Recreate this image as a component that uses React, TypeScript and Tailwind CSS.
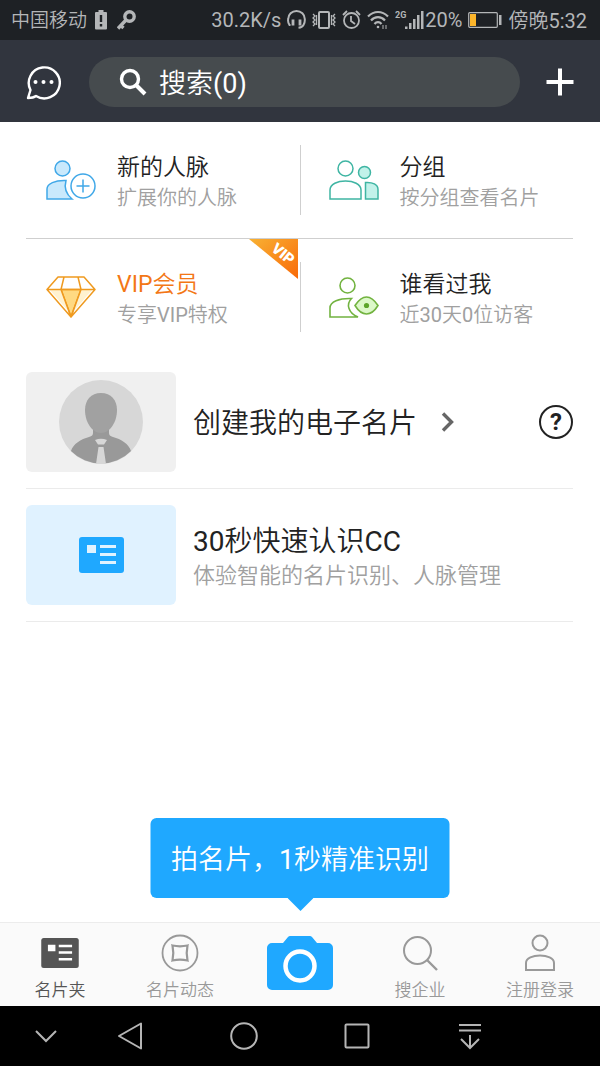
import React from 'react';

interface ShortcutProps {
    title: string;
    subtitle: string;
    icon: React.ReactNode;
    className?: string;
    titleClass?: string;
    children?: React.ReactNode;
}

const StatusBar = () => (
    <div className="flex h-10 items-center justify-between bg-[#1e2125] pl-[11px] pr-[13px] text-[20px] leading-6 text-[#b4b6b8]">
        <div className="flex items-center">
            <span className="pt-0.5 text-[19px]">中国移动</span>
            <svg className="ml-2 h-5 w-3" viewBox="0 0 12 20" fill="currentColor">
                <path fillRule="evenodd" d="M3.500 0h5v2H11a1 1 0 0 1 1 1v15.500a1 1 0 0 1-1 1H1a1 1 0 0 1-1-1V3a1 1 0 0 1 1-1h2.500zM4.800 5v7h2.400V5zM4.800 14v2.500h2.400V14z" />
            </svg>
            <svg className="ml-2.5 h-5 w-5" viewBox="0 0 20 20" fill="none" stroke="currentColor" strokeWidth="3.400">
                <circle cx="12.500" cy="6.500" r="4.700" />
                <path d="M9.500 9.500L1 18.500M3 15l3.500 3" />
            </svg>
        </div>
        <div className="flex items-center">
            <span>30.2K/s</span>
            <svg className="ml-1.5 h-5 w-[19px]" viewBox="0 0 19 20" fill="none" stroke="currentColor" strokeWidth="2">
                <path d="M3.500 15H2.500C.5 12 1 10 1.200 9a8.300 8 0 0 1 16.600 0c.2 3 0 4-1.300 6-1 1.800-2.500 2.500-5 2.800" />
                <path d="M6 9.500v6M13 9.500v6" strokeWidth="2.800" />
            </svg>
            <svg className="ml-1.5 h-5 w-6" viewBox="0 0 24 20" fill="none" stroke="currentColor" strokeWidth="2">
                <rect x="7" y="2" width="10" height="16" rx="1" />
                <path d="M1 4l2 2-2 2 2 2-2 2 2 2-2 2M4.500 5v10M23 4l-2 2 2 2-2 2 2 2-2 2 2 2M19.500 5v10" strokeWidth="1.300" />
            </svg>
            <svg className="ml-1.5 h-5 w-[19px]" viewBox="0 0 19 20" fill="none" stroke="currentColor" strokeWidth="1.800">
                <circle cx="9.500" cy="10.500" r="7.500" />
                <path d="M9 6v5l4 3M1 5l4-4M18 5l-4-4" />
            </svg>
            <svg className="ml-1.5 h-5 w-[22px]" viewBox="0 0 22 20" fill="none" stroke="currentColor" strokeWidth="2.200">
                <path d="M1 6.500c6-6 14-6 20 0M4 10.500c4-4.500 10-4.500 14 0M7.500 14c2-2.500 5-2.500 7 0" />
                <circle cx="11" cy="17" r="1.300" fill="currentColor" stroke="none" />
                <path d="M16 15v4M19 15v4" strokeWidth="1" />
            </svg>
            <svg className="ml-1.5 h-[22px] w-[30px]" viewBox="0 0 30 22" fill="currentColor">
                <text x="0" y="9" fontSize="9" fontWeight="700">2G</text>
                <path d="M10 17.500h2.500V20H10zM14 14h2.500v6H14zM18 10h2.500v10H18zM22 6h2.500v14H22zM26 2h2.500v18H26z" />
            </svg>
            <span>20%</span>
            <svg className="ml-1.5 h-4 w-[34px]" viewBox="0 0 34 16" fill="none">
                <rect x="0.700" y="0.700" width="28.600" height="14.600" rx="1" stroke="currentColor" strokeWidth="1.200" />
                <rect x="2" y="2" width="6" height="12" fill="#fcb52b" />
                <rect x="31" y="3" width="2.500" height="10" fill="currentColor" />
            </svg>
            <span className="ml-1.5 pt-0.5">傍晚5:32</span>
        </div>
    </div>
);

const SearchHeader = () => (
    <header className="flex h-[82px] items-center bg-[#31353e] px-[26px] pt-0.5">
        <button type="button" aria-label="消息">
            <svg className="h-9 w-[35px]" viewBox="0 0 35 36" fill="none" stroke="#fff" strokeWidth="2.400">
                <path d="M2 34l2.500-8A15.500 15.500 0 1 1 10 32c-2 1.500-4.500 2-8 2z" strokeLinejoin="round" />
                <g fill="#fff" stroke="none">
                    <circle cx="9.500" cy="18" r="2" />
                    <circle cx="17.500" cy="18" r="2" />
                    <circle cx="25.500" cy="18" r="2" />
                </g>
            </svg>
        </button>
        <label className="ml-7 flex h-[50px] min-w-0 flex-1 items-center rounded-full bg-[#464b4e] pl-[30px]">
            <svg className="h-7 w-7 shrink-0" viewBox="0 0 28 28" fill="none" stroke="#fff" strokeWidth="3.400">
                <circle cx="11" cy="11" r="8.500" />
                <path d="M17 17l9 9" strokeWidth="4" />
            </svg>
            <input
                type="text"
                aria-label="搜索"
                placeholder="搜索(0)"
                className="ml-3 w-full min-w-0 bg-transparent pt-1 text-[27px] leading-8 text-white outline-none placeholder:text-white"
            />
        </label>
        <button type="button" aria-label="添加" className="ml-[26px]">
            <svg className="h-7 w-7" viewBox="0 0 28 28" stroke="#fff" strokeWidth="4">
                <path d="M14 0.500v27M0.500 14h27" />
            </svg>
        </button>
    </header>
);

const Shortcut = ({ title, subtitle, icon, className = 'pl-5', titleClass = 'text-[#222]', children }: ShortcutProps) => (
    <a href="#" className={`relative flex h-[116px] items-center gap-[21px] ${className}`}>
        {icon}
        <span className="flex flex-col pt-1">
            <span className={`text-[23px] leading-8 ${titleClass}`}>{title}</span>
            <span className="text-[20px] leading-7 text-[#a0a0a0]">{subtitle}</span>
        </span>
        {children}
    </a>
);

const NewContactIcon = () => (
    <svg className="h-11 w-[50px]" viewBox="0 0 50 44" fill="#c9e9fc" stroke="#40a8e8" strokeWidth="1.500">
        <circle cx="16.500" cy="10.500" r="7.500" />
        <path d="M1 41V31c0-5 8-9 19-8.500-2 7-.5 13 6 18.500z" />
        <circle cx="37" cy="28" r="12" fill="#fff" />
        <path d="M37 21.500v13M30.500 28h13" />
    </svg>
);

const GroupIcon = () => (
    <svg className="h-11 w-[50px]" viewBox="0 0 50 44" fill="none" stroke="#3fb5a3" strokeWidth="1.500">
        <circle cx="16.500" cy="10.500" r="7.500" />
        <path d="M1 41V32c0-12 31-12 31 0v9z" />
        <circle cx="35.500" cy="14.500" r="6" fill="#c2f2ea" />
        <path d="M36.500 24.500c7-.5 12.500 2 12.500 7V41H36.500z" fill="#c2f2ea" />
    </svg>
);

const DiamondIcon = () => (
    <svg className="h-[42px] w-[50px]" viewBox="0 0 50 42" fill="none" stroke="#ef9a1f" strokeWidth="1.500" strokeLinejoin="round">
        <path d="M15 13.500h20l-10 27z" fill="#ffd982" />
        <path d="M4 14h11l8 22zM35 14h11L27 36z" fill="#fff2d0" stroke="none" />
        <path d="M12 1h26l11 12.500L25 41 1 13.500zM1 13.500h48M18 1l-3 12.500L25 41l10-27.500L32 1" />
    </svg>
);

const VisitorIcon = () => (
    <svg className="h-11 w-[50px]" viewBox="0 0 50 44" fill="none" stroke="#72b340" strokeWidth="1.600">
        <circle cx="18.500" cy="10.500" r="7.500" />
        <path d="M1 42V33c0-6 9-10 21.500-9.500C17 29 19 38 29 42z" />
        <path d="M26 30.500C30 24.500 33 22 37.500 22S45 24.500 49 30.500C45 37 42 39 37.500 39S30 37 26 30.500z" fill="#dcf8c9" />
        <circle cx="37.500" cy="30.500" r="2.600" fill="#5ca52a" stroke="none" />
    </svg>
);

const VipRibbon = () => (
    <svg className="absolute right-0.5 top-0 h-10 w-[49px] overflow-visible" viewBox="0 0 49 40">
        <defs>
            <linearGradient id="ribbon" x1="0" y1="0" x2="1" y2="1">
                <stop offset="0" stopColor="#f8b133" />
                <stop offset="1" stopColor="#f96a08" />
            </linearGradient>
        </defs>
        <path d="M0 0h49v40z" fill="url(#ribbon)" />
        <text x="34" y="20" fill="#fff" fontSize="15" fontWeight="900" textAnchor="middle" transform="rotate(39 34 15)">VIP</text>
    </svg>
);

const CardIcon = ({ className, lines }: { className: string; lines: string }) => (
    <svg className={className} viewBox="0 0 45 36">
        <rect width="45" height="36" rx="3" fill="currentColor" />
        <path d="M8 8h9v8H8zM21 8h16v3H21zM21 16h16v3H21zM21 24h16v3H21z" fill={lines} />
    </svg>
);

const Avatar = () => (
    <svg className="h-[84px] w-[84px]" viewBox="0 0 84 84">
        <circle cx="42" cy="42" r="42" fill="#d7d7d7" />
        <path d="M12 71c2-7 10-12 18-14 3-1 4-2 4-4v-6h16v6c0 2 1 3 4 4 8 2 16 7 18 14A42 42 0 0 1 12 71z" fill="#999" />
        <path d="M42 13c10 0 16 7 16 17 0 12-7 23-16 23S26 42 26 30c0-10 6-17 16-17z" fill="#a1a1a1" />
        <path d="M36 60q6-2.500 12 0l-3 4.500h-6zM39.500 67h5L47 84H37z" fill="#d7d7d7" />
    </svg>
);

const tabs = [
    {
        label: '名片夹',
        className: 'text-[#555]',
        icon: <CardIcon className="h-[30px] w-[38px]" lines="#fff" />,
    },
    {
        label: '名片动态',
        className: 'text-[#999]',
        icon: (
            <svg className="h-[38px] w-[38px]" viewBox="0 0 38 38" fill="none" stroke="currentColor" strokeWidth="1.800">
                <circle cx="19" cy="19" r="17.500" />
                <path d="M11.500 11.500q7.500 1.600 15 0-1.600 7.500 0 15-7.500-1.600-15 0 1.600-7.500 0-15z" strokeWidth="2.200" />
            </svg>
        ),
    },
    {
        label: '搜企业',
        className: 'text-[#999]',
        icon: (
            <svg className="h-[38px] w-[38px]" viewBox="0 0 38 38" fill="none" stroke="currentColor" strokeWidth="2">
                <circle cx="16.500" cy="16.500" r="13.500" />
                <path d="M26 26l10 10" strokeWidth="2.400" />
            </svg>
        ),
    },
    {
        label: '注册登录',
        className: 'text-[#999]',
        icon: (
            <svg className="h-[38px] w-[38px]" viewBox="0 0 38 38" fill="none" stroke="currentColor" strokeWidth="2">
                <circle cx="19" cy="9" r="7.500" />
                <path d="M5 36V29c0-10 28-10 28 0v7z" />
            </svg>
        ),
    },
];

const Tab = ({ label, className, icon }: (typeof tabs)[number]) => (
    <button type="button" className={`flex flex-col items-center pt-[11px] ${className}`}>
        <span className="flex h-[38px] items-center">{icon}</span>
        <span className="mt-1.5 text-[17px] leading-6">{label}</span>
    </button>
);

const CameraTab = () => (
    <div className="relative flex justify-center pt-[13px]">
        <div className="absolute bottom-full left-1/2 mb-[25px] flex h-20 w-[299px] -translate-x-1/2 items-center justify-center rounded-md bg-[#1fa8ff] pt-1 text-[27px] text-white">
            拍名片，1秒精准识别
            <svg className="absolute left-1/2 top-full h-[13px] w-[26px] -translate-x-1/2" viewBox="0 0 26 13">
                <path d="M0 0h26L13 13z" fill="#1fa8ff" />
            </svg>
        </div>
        <button type="button" aria-label="拍名片" className="self-start">
            <svg className="h-[54px] w-[68px]" viewBox="0 0 68 54">
                <path d="M6 7h11l5-6q1-1 2-1h20q1 0 2 1l5 6h11a5 5 0 0 1 5 5v37a5 5 0 0 1-5 5H6a5 5 0 0 1-5-5V12a5 5 0 0 1 5-5z" fill="#1fa8ff" />
                <circle cx="34" cy="30" r="14.500" fill="none" stroke="#fff" strokeWidth="4.500" />
            </svg>
        </button>
    </div>
);

const SystemNav = () => (
    <nav className="flex h-[60px] items-center bg-black pl-[18px] pr-[74px] text-[#b5b5b5]">
        <button type="button" aria-label="收起" className="flex w-14 justify-center">
            <svg className="h-6 w-6" viewBox="0 0 24 24" fill="none" stroke="currentColor" strokeWidth="2">
                <path d="M2 7l10 10L22 7" />
            </svg>
        </button>
        <button type="button" aria-label="返回" className="flex flex-1 justify-center">
            <svg className="h-7 w-7" viewBox="0 0 28 28" fill="none" stroke="currentColor" strokeWidth="2" strokeLinejoin="round">
                <path d="M24 1.500v25L2 14z" />
            </svg>
        </button>
        <button type="button" aria-label="主页" className="flex flex-1 justify-center">
            <svg className="h-7 w-7" viewBox="0 0 28 28" fill="none" stroke="currentColor" strokeWidth="2">
                <circle cx="14" cy="14" r="12.800" />
            </svg>
        </button>
        <button type="button" aria-label="最近任务" className="flex flex-1 justify-center">
            <svg className="h-7 w-7" viewBox="0 0 28 28" fill="none" stroke="currentColor" strokeWidth="2">
                <rect x="2.500" y="2.500" width="23" height="23" rx="1" />
            </svg>
        </button>
        <button type="button" aria-label="下拉通知" className="flex flex-1 justify-center">
            <svg className="h-7 w-7" viewBox="0 0 28 28" fill="none" stroke="currentColor" strokeWidth="2">
                <path d="M3 3h22M3 8.500h22M14 13v12M5 17l9 9 9-9" />
            </svg>
        </button>
    </nav>
);

export const App = () => {
    return (
        <div className="flex min-h-screen flex-col bg-white font-['Roboto','Noto_Sans_CJK_SC_DemiLight','Noto_Sans_CJK_SC',sans-serif]">
            <StatusBar />
            <SearchHeader />

            <main className="flex-1 pl-[26px] pr-[27px]">
                <div className="grid grid-cols-2 border-b border-[#cfcfcf]">
                    <Shortcut title="新的人脉" subtitle="扩展你的人脉" icon={<NewContactIcon />} />
                    <div className="flex items-center">
                        <div className="h-[70px] w-px bg-[#cfcfcf]" />
                        <Shortcut title="分组" subtitle="按分组查看名片" icon={<GroupIcon />} className="flex-1 pl-7" />
                    </div>
                </div>
                <div className="grid grid-cols-2">
                    <Shortcut title="VIP会员" subtitle="专享VIP特权" icon={<DiamondIcon />} titleClass="text-[#f37716]">
                        <VipRibbon />
                    </Shortcut>
                    <div className="flex items-center">
                        <div className="h-[70px] w-px bg-[#cfcfcf]" />
                        <Shortcut title="谁看过我" subtitle="近30天0位访客" icon={<VisitorIcon />} className="flex-1 pl-7" />
                    </div>
                </div>

                <div className="flex items-center border-b border-[#ebebeb] pb-4 pt-[17px]">
                    <a href="#" className="flex items-center">
                        <span className="flex h-[100px] w-[150px] items-center justify-center rounded-md bg-[#f0f0f0]">
                            <Avatar />
                        </span>
                        <span className="ml-[17px] pt-1 text-[28px] leading-9 text-[#222]">创建我的电子名片</span>
                        <svg className="ml-6 h-5 w-[14px]" viewBox="0 0 14 20" fill="none" stroke="#666" strokeWidth="3.400">
                            <path d="M2 1.500l8.500 8.500L2 18.500" />
                        </svg>
                    </a>
                    <button type="button" aria-label="帮助" className="ml-auto flex h-[34px] w-[34px] items-center justify-center rounded-full border-2 border-[#222] text-[24px] font-bold leading-7 text-[#222]">
                        ?
                    </button>
                </div>

                <a href="#" className="flex items-center border-b border-[#ebebeb] py-4">
                    <span className="flex h-[100px] w-[150px] items-center justify-center rounded-md bg-[#e0f2ff] text-[#1fa8ff]">
                        <CardIcon className="h-9 w-[45px]" lines="#e0f2ff" />
                    </span>
                    <span className="ml-[17px] flex flex-col pt-1.5">
                        <span className="text-[28px] leading-9 text-[#222]">30秒快速认识CC</span>
                        <span className="text-[22px] leading-8 text-[#a0a0a0]">体验智能的名片识别、人脉管理</span>
                    </span>
                </a>
            </main>

            <nav className="grid h-[84px] grid-cols-5 border-t border-[#ececec] bg-[#fafafa]">
                {tabs.slice(0, 2).map(t => <Tab key={t.label} {...t} />)}
                <CameraTab />
                {tabs.slice(2).map(t => <Tab key={t.label} {...t} />)}
            </nav>
            <SystemNav />
        </div>
    );
};

export default App;
